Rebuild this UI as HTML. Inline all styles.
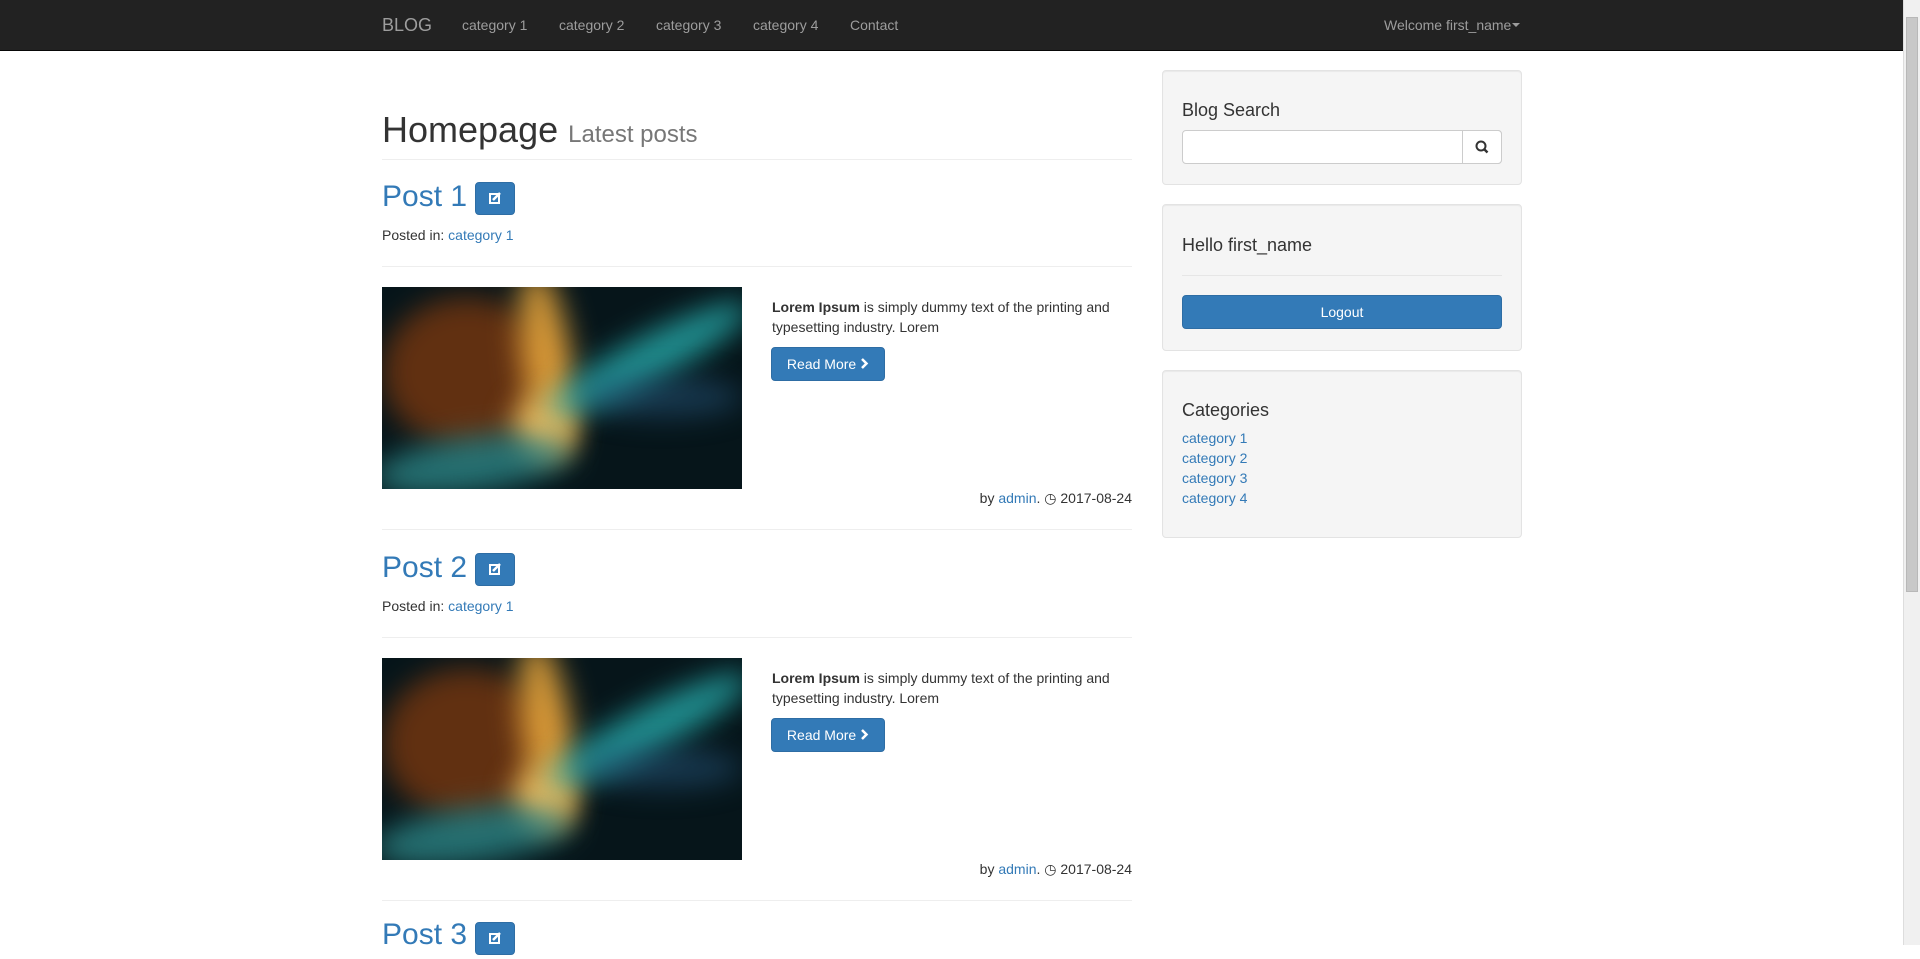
<!DOCTYPE html>
<html><head><meta charset="utf-8"><style>
*{box-sizing:border-box}
html,body{margin:0;padding:0}
body{width:1920px;height:945px;overflow:hidden;font-family:"Liberation Sans",Arial,sans-serif;font-size:14px;line-height:20px;color:#333;background:#fff;position:relative}
a{color:#337ab7;text-decoration:none}
.nav{position:absolute;left:0;top:0;width:1903px;height:51px;background:#222;border-bottom:1px solid #080808}
.nav span{position:absolute;top:15px;color:#9d9d9d;font-size:14px}
.brand{font-size:18px!important;top:15px!important}
.sb{position:absolute;right:0;top:0;width:17px;height:945px;background:#f0f0f0;border-left:1px solid #ddd}
.thumb{position:absolute;left:2px;top:17px;width:12px;height:575px;background:#c8c8c8;border:1px solid #b8b8b8}
.abs{position:absolute}
h1{position:absolute;margin:0;font-weight:500;font-size:36px;line-height:40px;left:382px;top:110px}
h1 small{font-size:24px;color:#777;font-weight:400}
.hr{position:absolute;left:382px;width:750px;height:1px;background:#eee}
.ptitle{position:absolute;left:382px;font-size:30px;line-height:33px;color:#337ab7}
.edit{position:absolute;left:475px;width:40px;height:33px;background:#337ab7;border:1px solid #2e6da4;border-radius:4px}
.img{position:absolute;left:382px;width:360px;height:202px;overflow:hidden;background:#06151a}
.img i{position:absolute;display:block;border-radius:50%;filter:blur(14px)}
.txt{position:absolute;left:772px;width:360px}
.btn{position:absolute;background:#337ab7;border:1px solid #2e6da4;border-radius:4px;color:#fff;text-align:center}
.meta{position:absolute;right:788px;}
.well{position:absolute;left:1162px;width:360px;background:#f5f5f5;border:1px solid #e3e3e3;border-radius:4px;box-shadow:inset 0 1px 1px rgba(0,0,0,.05)}
.well h4{position:absolute;margin:0;left:19px;font-size:18px;font-weight:500;line-height:20px}
</style></head><body>
<div class="nav">
<span class="brand" style="left:382px">BLOG</span>
<span style="left:462px">category 1</span>
<span style="left:559px">category 2</span>
<span style="left:656px">category 3</span>
<span style="left:753px">category 4</span>
<span style="left:850px">Contact</span>
<span style="left:1384px">Welcome first_name<span style="position:relative;top:-3px;display:inline-block;width:0;height:0;border-left:4px solid transparent;border-right:4px solid transparent;border-top:4px solid #9d9d9d;margin-left:1px"></span></span>
</div>

<h1>Homepage <small>Latest posts</small></h1>
<div class="hr" style="top:159px"></div>

<!-- post 1 -->
<div class="ptitle" style="top:180px">Post 1</div>
<div class="edit" style="top:182px"><svg width="38" height="31" viewBox="0 0 38 31"><rect x="14" y="11" width="9" height="9" fill="none" stroke="#fff" stroke-width="2"/><path d="M17 17l7-7" stroke="#fff" stroke-width="2.5"/></svg></div>
<div class="abs" style="left:382px;top:225px">Posted in: <a>category 1</a></div>
<div class="hr" style="top:266px"></div>
<div class="img" style="top:287px">
<i style="left:0;top:10px;width:170px;height:150px;background:rgba(120,55,15,.8)"></i>
<i style="left:140px;top:-20px;width:50px;height:190px;background:rgba(240,170,60,.85);transform:rotate(-8deg)"></i>
<i style="left:130px;top:110px;width:60px;height:60px;background:rgba(250,190,90,.9)"></i>
<i style="left:150px;top:50px;width:230px;height:45px;background:rgba(40,180,180,.75);transform:rotate(-28deg)"></i>
<i style="left:-10px;top:150px;width:200px;height:55px;background:rgba(50,150,150,.7);transform:rotate(-8deg)"></i>
<i style="left:200px;top:90px;width:160px;height:40px;background:rgba(40,90,130,.5)"></i>
</div>
<div class="txt" style="top:297px"><b>Lorem Ipsum</b> is simply dummy text of the printing and typesetting industry. Lorem</div>
<div class="btn" style="left:771px;top:347px;width:114px;height:34px;line-height:32px">Read More <svg width="9" height="11" viewBox="0 0 9 11"><path d="M2 1l4.5 4.5L2 10" fill="none" stroke="#fff" stroke-width="2.5"/></svg></div>
<div class="meta" style="top:488px">by <a>admin</a>. &#x25F7; 2017-08-24</div>
<div class="hr" style="top:529px"></div>

<!-- post 2 -->
<div class="ptitle" style="top:551px">Post 2</div>
<div class="edit" style="top:553px"><svg width="38" height="31" viewBox="0 0 38 31"><rect x="14" y="11" width="9" height="9" fill="none" stroke="#fff" stroke-width="2"/><path d="M17 17l7-7" stroke="#fff" stroke-width="2.5"/></svg></div>
<div class="abs" style="left:382px;top:596px">Posted in: <a>category 1</a></div>
<div class="hr" style="top:637px"></div>
<div class="img" style="top:658px">
<i style="left:0;top:10px;width:170px;height:150px;background:rgba(120,55,15,.8)"></i>
<i style="left:140px;top:-20px;width:50px;height:190px;background:rgba(240,170,60,.85);transform:rotate(-8deg)"></i>
<i style="left:130px;top:110px;width:60px;height:60px;background:rgba(250,190,90,.9)"></i>
<i style="left:150px;top:50px;width:230px;height:45px;background:rgba(40,180,180,.75);transform:rotate(-28deg)"></i>
<i style="left:-10px;top:150px;width:200px;height:55px;background:rgba(50,150,150,.7);transform:rotate(-8deg)"></i>
<i style="left:200px;top:90px;width:160px;height:40px;background:rgba(40,90,130,.5)"></i>
</div>
<div class="txt" style="top:668px"><b>Lorem Ipsum</b> is simply dummy text of the printing and typesetting industry. Lorem</div>
<div class="btn" style="left:771px;top:718px;width:114px;height:34px;line-height:32px">Read More <svg width="9" height="11" viewBox="0 0 9 11"><path d="M2 1l4.5 4.5L2 10" fill="none" stroke="#fff" stroke-width="2.5"/></svg></div>
<div class="meta" style="top:859px">by <a>admin</a>. &#x25F7; 2017-08-24</div>
<div class="hr" style="top:900px"></div>

<div class="ptitle" style="top:918px">Post 3</div>
<div class="edit" style="top:922px"><svg width="38" height="31" viewBox="0 0 38 31"><rect x="14" y="11" width="9" height="9" fill="none" stroke="#fff" stroke-width="2"/><path d="M17 17l7-7" stroke="#fff" stroke-width="2.5"/></svg></div>

<!-- sidebar -->
<div class="well" style="top:70px;height:115px">
<h4 style="top:29px">Blog Search</h4>
<div class="abs" style="left:19px;top:59px;width:320px;height:34px;background:#fff;border:1px solid #ccc;border-radius:4px"></div>
<div class="abs" style="left:299px;top:59px;width:40px;height:34px;background:#fff;border:1px solid #ccc;border-radius:0 4px 4px 0"><svg width="38" height="32" viewBox="0 0 38 32"><circle cx="18" cy="15" r="4.5" fill="none" stroke="#333" stroke-width="2"/><path d="M21 18l3.5 3.5" stroke="#333" stroke-width="2.5"/></svg></div>
</div>
<div class="well" style="top:204px;height:147px">
<h4 style="top:30px">Hello first_name</h4>
<div class="abs" style="left:19px;top:70px;width:320px;height:1px;background:#e6e6e6"></div>
<div class="btn" style="left:19px;top:90px;width:320px;height:34px;line-height:32px">Logout</div>
</div>
<div class="well" style="top:370px;height:168px">
<h4 style="top:29px">Categories</h4>
<div class="abs" style="left:19px;top:57px"><a>category 1</a><br><a>category 2</a><br><a>category 3</a><br><a>category 4</a></div>
</div>

<div class="sb"><div class="thumb"></div></div>
</body></html>
